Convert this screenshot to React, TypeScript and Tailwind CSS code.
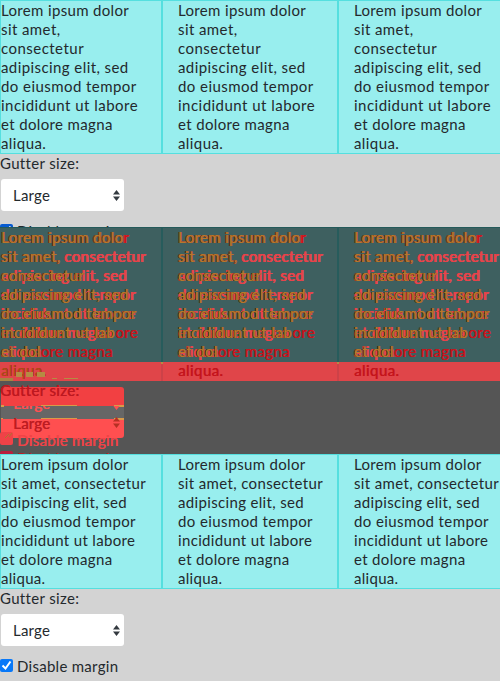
import React from 'react';

type Variant = 'before' | 'after';
type Line = { text: string; spacing: string };

const BEFORE: Line[] = [
  { text: 'Lorem ipsum dolor', spacing: 'tracking-[0.34px]' },
  { text: 'sit amet,', spacing: 'tracking-[0.42px]' },
  { text: 'consectetur', spacing: 'tracking-[0.47px]' },
  { text: 'adipiscing elit, sed', spacing: 'tracking-[0.42px]' },
  { text: 'do eiusmod tempor', spacing: 'tracking-[0.44px]' },
  { text: 'incididunt ut labore', spacing: 'tracking-[0.48px]' },
  { text: 'et dolore magna', spacing: 'tracking-[0.36px]' },
  { text: 'aliqua.', spacing: 'tracking-[0.42px]' },
];

const AFTER: Line[] = [
  { text: 'Lorem ipsum dolor', spacing: 'tracking-[0.3px]' },
  { text: 'sit amet, consectetur', spacing: 'tracking-[0.36px]' },
  { text: 'adipiscing elit, sed', spacing: 'tracking-[0.34px]' },
  { text: 'do eiusmod tempor', spacing: 'tracking-[0.4px]' },
  { text: 'incididunt ut labore', spacing: 'tracking-[0.34px]' },
  { text: 'et dolore magna', spacing: 'tracking-[0.34px]' },
  { text: 'aliqua.', spacing: 'tracking-[0.3px]' },
];

function Lines({ lines }: { lines: Line[] }) {
  return (
    <>
      {lines.map((line) => (
        <div key={line.text} className={`h-[19px] whitespace-pre ${line.spacing}`}>
          {line.text}
        </div>
      ))}
    </>
  );
}

function Columns({ variant }: { variant: Variant }) {
  const lines = variant === 'before' ? BEFORE : AFTER;
  const cell = 'box-border shrink-0 border border-[#55dfdf] bg-[#98eeee]';
  return (
    <div className="flex w-[514px]">
      <div className={`${cell} w-[162px]`}><Lines lines={lines} /></div>
      <div className={`${cell} w-[176px] pl-[15px]`}><Lines lines={lines} /></div>
      <div className={`${cell} w-[176px] pl-[15px]`}><Lines lines={lines} /></div>
    </div>
  );
}

function Arrows({ className }: { className: string }) {
  return (
    <svg viewBox="0 0 7 11" className={`h-[11px] w-[7px] ${className}`} fill="currentColor">
      <path d="M3.5 0 7 4.5H0ZM3.5 11 0 6.5h7Z" />
    </svg>
  );
}

function Controls({ variant }: { variant: Variant }) {
  return (
    <div>
      <div className="h-[25px] tracking-[0.34px]">Gutter size:</div>
      <div className="ml-px flex h-8 w-[123px] items-center justify-between rounded-[3px] bg-white pr-[4px] pl-3">
        <span className="pt-px tracking-[0.2px]">Large</span>
        <Arrows className="text-[#343a40]" />
      </div>
      <div className="mt-[13px] flex items-start">
        <span className={`flex size-[13px] items-center justify-center rounded-[2px] ${variant === 'before' ? 'bg-[#075bd0]' : 'bg-[#0878f8]'}`}>
          <svg viewBox="0 0 13 13" className="size-[13px]" fill="none" stroke="white" strokeWidth="2">
            <path d="m2.5 6.5 3 3 5-7" />
          </svg>
        </span>
        <span className="-mt-[2px] ml-1 tracking-[0.28px]">Disable margin</span>
      </div>
    </div>
  );
}

function Panel({ variant }: { variant: Variant }) {
  return (
    <section className="h-[227px] overflow-hidden bg-[#d3d3d3] text-[#24292d]">
      <Columns variant={variant} />
      <Controls variant={variant} />
    </section>
  );
}

const MIXED: { same: string; changed: string }[] = [
  { same: 'Lorem ipsum dolo', changed: 'r' },
  { same: 'sit amet,', changed: '' },
  { same: 'consectetur', changed: '' },
  { same: 'adipiscing elit, sed', changed: '' },
  { same: 'do eiusmod tempor', changed: '' },
  { same: 'incididunt ut lab', changed: 'ore' },
  { same: 'et dol', changed: 'ore magna' },
  { same: '', changed: 'aliqua.' },
];

function MixedText({ left, last }: { left: string; last: string }) {
  return (
    <div className={`absolute top-px ${left}`}>
      <div className="absolute top-0 left-0 text-[#e8434a] [text-shadow:0.6px_0_#e8434a,-0.4px_0_#e8434a]">
        <Lines lines={AFTER} />
      </div>
      <div className="relative text-[#c8141c] [text-shadow:0.5px_0_#c8141c]">
        {MIXED.map((line, i) => (
          <div key={i} className={`h-[19px] whitespace-pre ${BEFORE[i].spacing}`}>
            <span className="text-[#b8782c] [text-shadow:0.6px_0_#a0611f,-0.8px_0_#3b2414]">{line.same}</span>
            <span className={i === 7 ? last : ''}>{line.changed}</span>
          </div>
        ))}
      </div>
    </div>
  );
}

function DiffPanel() {
  return (
    <section className="relative h-[227px] overflow-hidden bg-[#555]">
      <div className="flex h-[154px] flex-col border-t border-[#245a5a]">
        <div className="flex h-[134px] bg-[#3e6060]">
          <div className="w-[161px]" />
          <div className="w-[2px] bg-[#275c5c]" />
          <div className="w-[174px]" />
          <div className="w-[2px] bg-[#275c5c]" />
        </div>
        <div className="flex h-[19px] bg-[#e04549]">
          <div className="ml-[161px] h-full w-[2px] border-t-2 border-[#b58c43] bg-[#cd4248]" />
          <div className="ml-[174px] h-full w-[2px] border-t-2 border-[#b58c43] bg-[#cd4248]" />
        </div>
      </div>
      <MixedText left="left-px" last="text-[#a75216]" />
      <MixedText left="left-[178px]" last="text-[#c4141c]" />
      <MixedText left="left-[354px]" last="text-[#c4141c]" />
      <div className="absolute top-[160px] left-px w-[123px] overflow-hidden rounded-[3px]">
        <div className="h-[19px] bg-[#f24042]" />
        <div className="h-[13px] bg-[#666]" />
        <div className="h-[19px] bg-[#ff4f50]" />
      </div>
      <div className="absolute top-[178px] left-px flex w-[123px] justify-between">
        <span className="h-[2px] w-[3px] bg-[#d99a48]" />
        <span className="h-px w-[36px] bg-[#d99a48]" />
        <span className="h-[2px] w-[10px] bg-[#d99a48]" />
      </div>
      <div className="absolute top-[191px] left-px flex w-[123px] justify-between">
        <span className="h-px w-[2px] bg-[#d99a48]" />
        <span className="h-px w-[36px] bg-[#d99a48]" />
        <span className="h-[2px] w-[10px] bg-[#d99a48]" />
      </div>
      <div className="absolute top-[145px] left-0 w-[90px]">
        <div className="ml-4 flex gap-1">
          <span className="h-[5px] w-[6px] bg-[#b58c43]" />
          <span className="h-[5px] w-[7px] bg-[#b58c43]" />
          <span className="h-[5px] w-[8px] bg-[#b58c43]" />
        </div>
        <div className="mt-px flex">
          <span className="h-[3px] w-[13px] bg-[#a88342]" />
          <span className="ml-[39px] h-px w-[5px] bg-[#b58c43]" />
          <span className="ml-[7px] h-px w-[14px] bg-[#b58c43]" />
        </div>
      </div>
      <div className="absolute top-[154px] left-0 tracking-[0.34px] text-[#bd1820] [text-shadow:0.5px_0_#bd1820]">Gutter size:</div>
      <div className="absolute top-[179px] left-[13px] h-[9px] overflow-hidden text-[#ff5052] [text-shadow:0.6px_0_#ff5052]">
        <div className="-mt-[12px] tracking-[0.2px]">Large</div>
      </div>
      <div className="absolute top-[187px] left-[13px] tracking-[0.2px] text-[#bd1c22] [text-shadow:0.5px_0_#bd1c22]">Large</div>
      <Arrows className="absolute top-[190px] left-[113px] text-[#b53024]" />
      <div className="absolute top-[179px] left-[113px] h-[4px] w-[7px] overflow-hidden">
        <Arrows className="-mt-[7px] text-[#ff5052]" />
      </div>
      <div className="absolute top-[205px] left-0 size-[13px] rounded-[2px] bg-[#ef4247]" />
      <svg viewBox="0 0 13 13" className="absolute top-[205px] left-0 size-[13px]" fill="none" stroke="#ad7530" strokeWidth="1">
        <path d="m5 6 4-4M9 5l3-4" />
      </svg>
      <div className="absolute top-[204px] left-[17px] tracking-[0.28px] text-[#f04347] [text-shadow:0.6px_0_#f04347]">Disable margin</div>
      <div className="absolute top-[224px] left-0 h-[3px] w-[13px] rounded-t-[2px] bg-[#b91e3d]" />
      <div className="absolute top-[222px] left-[17px] tracking-[0.28px] text-[#b91c24]">Disable margin</div>
    </section>
  );
}

export default function App() {
  return (
    <main className="h-[681px] w-[500px] overflow-hidden font-[Lato,sans-serif] text-[15px] leading-[19px]">
      <Panel variant="before" />
      <DiffPanel />
      <Panel variant="after" />
    </main>
  );
}
